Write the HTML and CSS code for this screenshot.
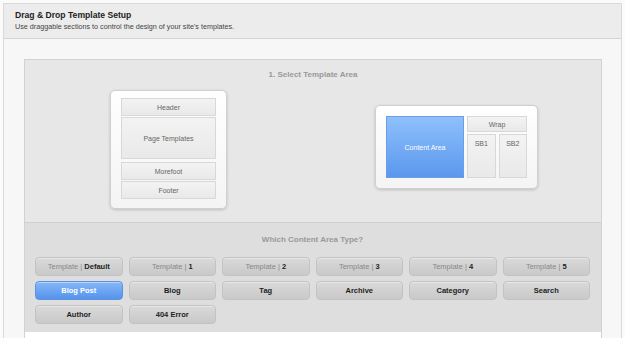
FILE: index.html
```html
<!DOCTYPE html>
<html>
<head>
<meta charset="utf-8">
<link rel="stylesheet" href="styles.css">
</head>
<body>
<div class="frame">
  <div class="head">
    <div class="title">Drag &amp; Drop Template Setup</div>
    <div class="sub">Use draggable sections to control the design of your site's templates.</div>
  </div>
  <div class="body">
    <div class="panel">
      <div class="area">
        <div class="area-title">1. Select Template Area</div>
        <div class="cards">
          <div class="card card-left">
            <div class="blk blk-s">Header</div>
            <div class="blk blk-l">Page Templates</div>
            <div class="blk blk-s mf">Morefoot</div>
            <div class="blk blk-s">Footer</div>
          </div>
          <div class="card card-right">
            <div class="content">Content Area</div>
            <div class="side">
              <div class="blk wrap">Wrap</div>
              <div class="sbs">
                <div class="blk sb">SB1</div>
                <div class="blk sb">SB2</div>
              </div>
            </div>
          </div>
        </div>
      </div>
      <div class="types">
        <div class="types-title">Which Content Area Type?</div>
        <div class="grid">
          <div class="btn tpl">Template | <b>Default</b></div>
          <div class="btn tpl">Template | <b>1</b></div>
          <div class="btn tpl">Template | <b>2</b></div>
          <div class="btn tpl">Template | <b>3</b></div>
          <div class="btn tpl">Template | <b>4</b></div>
          <div class="btn tpl">Template | <b>5</b></div>
          <div class="btn active">Blog Post</div>
          <div class="btn">Blog</div>
          <div class="btn">Tag</div>
          <div class="btn">Archive</div>
          <div class="btn">Category</div>
          <div class="btn">Search</div>
          <div class="btn">Author</div>
          <div class="btn">404 Error</div>
        </div>
      </div>
      <div class="foot"></div>
    </div>
  </div>
</div>
</body>
</html>
```

FILE: styles.css
```css
html, body {
  margin: 0;
  padding: 0;
  background: #fbfbfb;
  font-family: "Liberation Sans", Arial, Helvetica, sans-serif;
  overflow: hidden;
}
.frame {
  margin: 3px 3px 0 3px;
  border: 1px solid #dadada;
  border-bottom: none;
  background: #f7f7f7;
  height: 340px;
}
.head {
  height: 35px;
  box-sizing: border-box;
  background: #ececec;
  border-bottom: 1px solid #d4d4d4;
  padding: 6px 11px 0;
}
.title {
  font-size: 8.6px;
  font-weight: bold;
  color: #222;
  line-height: 11px;
}
.sub {
  font-size: 7.2px;
  color: #444;
  line-height: 11px;
}
.body {
  padding: 20px 19px 0 20px;
}
.panel {
  border: 1px solid #d2d2d2;
  border-bottom: none;
}
.area {
  background: #e7e7e7;
  height: 162px;
  border-bottom: 1px solid #cfcfcf;
}
.area-title {
  text-align: center;
  font-size: 8px;
  font-weight: bold;
  color: #999;
  padding-top: 9px;
  line-height: 11px;
}
.cards {
  display: flex;
  align-items: flex-start;
  padding-left: 85px;
  gap: 148px;
  margin-top: 10px;
}
.card {
  background: linear-gradient(#ffffff, #f4f4f4);
  border: 1px solid #d0d0d0;
  border-radius: 5px;
  box-shadow: 0 1px 3px rgba(0,0,0,0.18);
}
.card-left {
  width: 117px;
  height: 119px;
  box-sizing: border-box;
  padding: 7px 10px 0 10px;
  display: flex;
  flex-direction: column;
  gap: 1px;
}
.blk {
  background: linear-gradient(#f3f3f3, #e9e9e9);
  border: 1px solid #d8d8d8;
  box-sizing: border-box;
  font-size: 7px;
  color: #666;
  display: flex;
  align-items: center;
  justify-content: center;
}
.blk-s { height: 18px; }
.blk-l { height: 42px; }
.mf { margin-top: 2px; }
.card-right {
  width: 163px;
  height: 84px;
  box-sizing: border-box;
  margin-top: 15px;
  padding: 10px 10px 0 10px;
  display: flex;
  gap: 3px;
}
.content {
  width: 78px;
  height: 62px;
  background: linear-gradient(#8ec0fb, #5b97ee);
  border: 1px solid #6a9ee6;
  box-sizing: border-box;
  color: #fff;
  font-size: 7px;
  display: flex;
  align-items: center;
  justify-content: center;
}
.side {
  flex: 1;
  display: flex;
  flex-direction: column;
  gap: 2px;
}
.wrap { height: 16px; }
.sbs {
  display: flex;
  gap: 3px;
}
.sb {
  flex: 1;
  height: 44px;
  align-items: flex-start;
  padding-top: 5px;
}
.types {
  background: #dedede;
  height: 109px;
  box-sizing: border-box;
  padding: 11px 11px 0 10px;
}
.types-title {
  text-align: center;
  font-size: 8px;
  font-weight: bold;
  color: #999;
  line-height: 11px;
}
.grid {
  margin-top: 12px;
  display: grid;
  grid-template-columns: repeat(6, 1fr);
  column-gap: 6px;
  row-gap: 5px;
}
.btn {
  height: 19px;
  box-sizing: border-box;
  border: 1px solid #c3c3c3;
  border-radius: 4px;
  background: linear-gradient(#d9d9d9, #c9c9c9);
  box-shadow: inset 0 1px 0 rgba(255,255,255,0.4);
  font-size: 7.5px;
  font-weight: bold;
  color: #222;
  display: flex;
  align-items: center;
  justify-content: center;
}
.btn.tpl {
  font-weight: normal;
  color: #888;
  white-space: pre;
}
.btn.tpl b {
  color: #222;
}
.btn.active {
  background: linear-gradient(#86b8fa, #5593ec);
  border-color: #5f92dc;
  color: #fff;
}
.foot {
  height: 10px;
  background: #fff;
}
```
